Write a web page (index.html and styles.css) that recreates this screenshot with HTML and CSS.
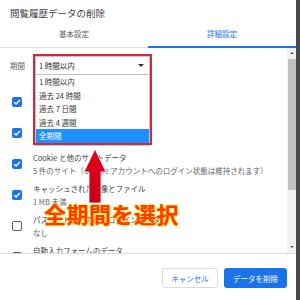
FILE: index.html
```html
<html>
  <head>
    <link rel="stylesheet" href="styles.css">
  </head>
  <body>
    <div class="dialog">
      <div class="dialog-title">閲覧履歴データの削除</div>

      <div class="tabs">
        <div class="tab">基本設定</div>
        <div class="tab tab-active">詳細設定</div>
      </div>

      <div class="panel">
        <div class="scroll">
          <div class="period">
            <span class="period-label">期間</span>
            <div class="picker">
              <div class="select">1 時間以内<span class="caret"></span></div>
              <ul class="options">
                <li>1 時間以内</li>
                <li>過去 24 時間</li>
                <li>過去 7 日間</li>
                <li>過去 4 週間</li>
                <li class="selected">全期間</li>
              </ul>
              <div class="callout"></div>
            </div>
          </div>

          <div class="item">
            <span class="check checked"><svg viewBox="0 0 10 10"><path d="M2.2 5.2l1.9 1.9 3.8-4" /></svg></span>
            <div class="item-text">
              <div class="item-title">閲覧履歴</div>
              <div class="item-sub">なし</div>
            </div>
          </div>
          <div class="item">
            <span class="check checked"><svg viewBox="0 0 10 10"><path d="M2.2 5.2l1.9 1.9 3.8-4" /></svg></span>
            <div class="item-text">
              <div class="item-title">ダウンロード履歴</div>
              <div class="item-sub">なし</div>
            </div>
          </div>
          <div class="item">
            <span class="check checked"><svg viewBox="0 0 10 10"><path d="M2.2 5.2l1.9 1.9 3.8-4" /></svg></span>
            <div class="item-text">
              <div class="item-title">Cookie と他のサイトデータ</div>
              <div class="item-sub">5 件のサイト（Google アカウントへのログイン状態は維持されます）</div>
            </div>
          </div>
          <div class="item">
            <span class="check checked"><svg viewBox="0 0 10 10"><path d="M2.2 5.2l1.9 1.9 3.8-4" /></svg></span>
            <div class="item-text">
              <div class="item-title">キャッシュされた画像とファイル</div>
              <div class="item-sub">1 MB 未満</div>
            </div>
          </div>
          <div class="item">
            <span class="check"></span>
            <div class="item-text">
              <div class="item-title">パスワードとその他のログインデータ</div>
              <div class="item-sub">なし</div>
            </div>
          </div>
          <div class="item">
            <span class="check"></span>
            <div class="item-text">
              <div class="item-title">自動入力フォームのデータ</div>
              <div class="item-sub">なし</div>
            </div>
          </div>

          <svg class="arrow" viewBox="0 0 24 56">
            <defs>
              <linearGradient id="arrow-fill" x1="0" y1="0" x2="0" y2="1">
                <stop offset="0" stop-color="#e3001b" />
                <stop offset="1" stop-color="#c8001a" />
              </linearGradient>
            </defs>
            <polygon points="12,1 23,24 18,24 18,55 6,55 6,24 1,24" fill="url(#arrow-fill)" stroke="#fff" stroke-width="0.8" />
          </svg>
          <div class="note">全期間を選択</div>
        </div>

        <div class="scrollbar">
          <span class="sb-up"></span>
          <div class="sb-thumb"></div>
          <div class="sb-track"></div>
          <span class="sb-down"></span>
        </div>
      </div>

      <div class="footer">
        <button class="btn btn-cancel">キャンセル</button>
        <button class="btn btn-primary">データを削除</button>
      </div>
    </div>
  </body>
</html>
```

FILE: styles.css
```css
body {
  margin: 0;
  width: 300px;
  height: 300px;
  background-color: #4a4a4a;
  font-family: "Noto Sans CJK JP", "Noto Sans", sans-serif;
  color: #202124;
  overflow: hidden;
}

.dialog {
  width: 296px;
  height: 300px;
  background-color: #fff;
  display: flex;
  flex-direction: column;
}

.dialog-title {
  height: 22px;
  padding: 7px 0 0 10px;
  box-sizing: border-box;
  font-size: 9.5px;
  line-height: 12px;
  color: #3c4043;
}

.tabs {
  display: flex;
  height: 26px;
  border-bottom: 1px solid #dadce0;
  box-sizing: border-box;
}

.tab {
  flex: 1;
  text-align: center;
  font-size: 7.5px;
  line-height: 24px;
  color: #5f6368;
}

.tab-active {
  color: #1a73e8;
  border-bottom: 2px solid #1a73e8;
  margin-bottom: -1px;
}

.panel {
  height: 205px;
  display: flex;
}

.scroll {
  flex: 1;
  position: relative;
  overflow: hidden;
}

.period {
  height: 38px;
  padding: 8px 0 0 10px;
  box-sizing: border-box;
  display: flex;
  align-items: flex-start;
}

.period-label {
  width: 25px;
  font-size: 7.5px;
  line-height: 19px;
  color: #5f6368;
}

.picker {
  position: relative;
  width: 115px;
}

.select {
  height: 19px;
  border: 1px solid #c4c4c4;
  box-sizing: border-box;
  padding-left: 3px;
  font-size: 7.5px;
  line-height: 17px;
  display: flex;
  justify-content: space-between;
  align-items: center;
}

.caret {
  width: 0;
  height: 0;
  margin-right: 5px;
  border-left: 3px solid transparent;
  border-right: 3px solid transparent;
  border-top: 3px solid #333;
}

.options {
  position: absolute;
  top: 19px;
  left: 0;
  right: 0;
  margin: 0;
  padding: 0 0 2px;
  list-style-type: none;
  background-color: #fff;
  border: 1px solid #c4c4c4;
  border-top: 0;
}

.options li {
  height: 13.5px;
  line-height: 13.5px;
  padding-left: 3px;
  font-size: 7.5px;
  color: #333;
}

.options .selected {
  background-color: #1e90ff;
  color: #fff;
}

.callout {
  position: absolute;
  top: -2px;
  left: -2px;
  right: -2px;
  height: 87px;
  border: 2px solid #d0293a;
}

.item {
  height: 31px;
  padding-left: 12px;
  display: flex;
  align-items: center;
}

.check {
  width: 10px;
  height: 10px;
  margin-right: 11px;
  border: 1.5px solid #5f6368;
  border-radius: 2px;
  box-sizing: border-box;
  flex-shrink: 0;
}

.check.checked {
  border: 0;
  background-color: #1a73e8;
}

.check svg {
  display: block;
  width: 10px;
  height: 10px;
  fill: none;
  stroke: #fff;
  stroke-width: 1.4;
}

.item-text {
  white-space: nowrap;
}

.item-title {
  font-size: 7.5px;
  line-height: 13px;
  color: #3c4043;
}

.item-sub {
  font-size: 7.5px;
  line-height: 13px;
  color: #5f6368;
}

.arrow {
  position: absolute;
  left: 83px;
  top: 100px;
  width: 24px;
  height: 56px;
}

.note {
  position: absolute;
  left: 44px;
  top: 151px;
  font-size: 22px;
  line-height: 28px;
  font-weight: bold;
  color: #ff3a00;
  letter-spacing: 0.5px;
  white-space: nowrap;
  text-shadow: 0 0 2px #ffd200, 0 0 2px #ffd200, 0 0 1px #ffe680;
}

.scrollbar {
  width: 9px;
  background-color: #f1f1f1;
  display: flex;
  flex-direction: column;
  align-items: center;
}

.sb-up,
.sb-down {
  width: 0;
  height: 0;
  border-left: 2px solid transparent;
  border-right: 2px solid transparent;
}

.sb-up {
  margin: 4px 0 5px;
  border-bottom: 2px solid #555;
}

.sb-down {
  margin: 4px 0 5px;
  border-top: 2px solid #555;
}

.sb-thumb {
  width: 8px;
  height: 131px;
  background-color: #c1c1c1;
}

.sb-track {
  flex: 1;
}

.footer {
  flex: 1;
  border-top: 1px solid #dadce0;
  padding: 14px 9px 0 0;
  display: flex;
  justify-content: flex-end;
  align-items: flex-start;
  gap: 6px;
}

.btn {
  height: 20px;
  padding: 0;
  border-radius: 3px;
  font-family: "Noto Sans CJK JP", "Noto Sans", sans-serif;
  font-size: 7.5px;
}

.btn-cancel {
  width: 56px;
  background-color: #fff;
  color: #1a73e8;
  border: 1px solid #dadce0;
}

.btn-primary {
  width: 63px;
  background-color: #1a73e8;
  color: #fff;
  border: 0;
}
```
